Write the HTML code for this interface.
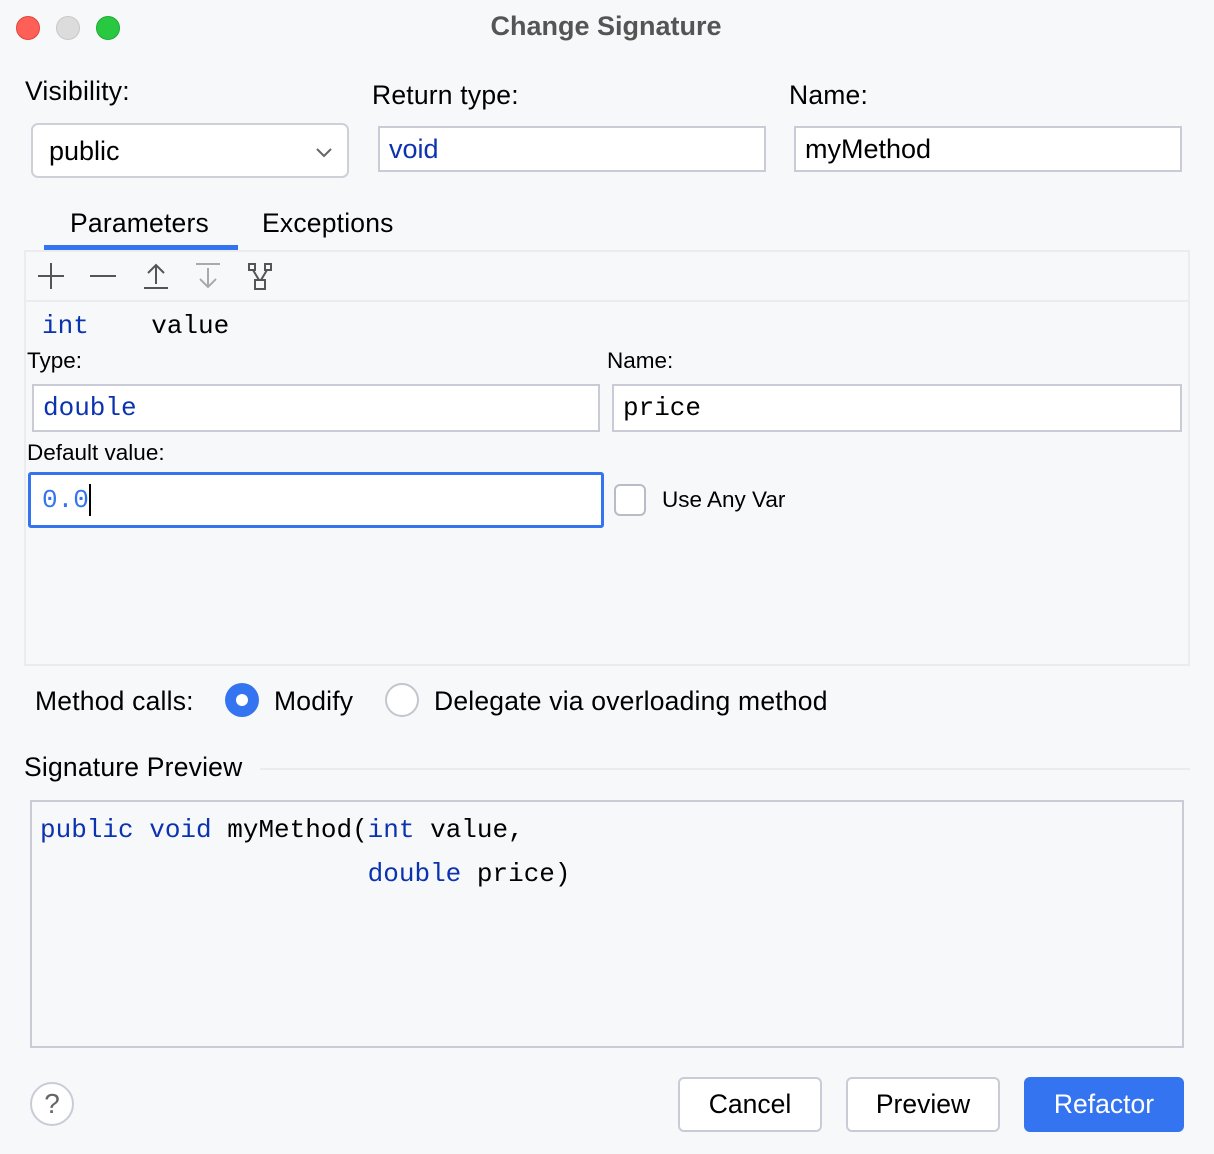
<!DOCTYPE html>
<html><head><style>
*{margin:0;padding:0;box-sizing:border-box}
body{width:1214px;height:1154px;background:#f7f8fa;font-family:"Liberation Sans",sans-serif;color:#000;position:relative;overflow:hidden}
.a{position:absolute}
.mono{font-family:"Liberation Mono",monospace}
.kw{color:#0b33b0}
.in{position:absolute;background:#fff;border:2px solid #c9ccd6;font-size:26px;padding-left:9px;display:flex;align-items:center}
.lbl{position:absolute;font-size:26.5px;letter-spacing:0.2px}
.sl{position:absolute;font-size:22.5px}
.btn{position:absolute;top:1077px;height:55px;border:2px solid #c9ccd6;border-radius:6px;background:#fff;font-size:26.5px;display:flex;align-items:center;justify-content:center}
</style></head><body>
<div class="a" style="left:16px;top:16px;width:24px;height:24px;border-radius:50%;background:#fe5f57;border:1px solid #e0443e"></div>
<div class="a" style="left:56px;top:16px;width:24px;height:24px;border-radius:50%;background:#dcdcdc;border:1px solid #c8c8c8"></div>
<div class="a" style="left:96px;top:16px;width:24px;height:24px;border-radius:50%;background:#28c840;border:1px solid #1eaa33"></div>
<div class="a" style="left:0;top:11px;width:1212px;text-align:center;font-size:27px;font-weight:bold;color:#555">Change Signature</div>

<div class="lbl" style="left:25px;top:76px">Visibility:</div>
<div class="lbl" style="left:372px;top:80px">Return type:</div>
<div class="lbl" style="left:789px;top:80px">Name:</div>
<div class="a" style="left:31px;top:123px;width:318px;height:55px;background:#fff;border:2px solid #cdd0d8;border-radius:7px;font-size:27px;padding:11px 0 0 16px">public
<svg class="a" style="left:282px;top:22px" width="18" height="12"><path d="M2 2l7 7 7-7" stroke="#666" stroke-width="2" fill="none"/></svg></div>
<div class="in" style="left:378px;top:126px;width:388px;height:46px;color:#0b33b0;font-size:27px">void</div>
<div class="in" style="left:794px;top:126px;width:388px;height:46px;font-size:27px">myMethod</div>

<div class="lbl" style="left:70px;top:208px">Parameters</div>
<div class="lbl" style="left:262px;top:208px">Exceptions</div>
<div class="a" style="left:44px;top:245px;width:194px;height:6px;background:#3574f0"></div>
<div class="a" style="left:24px;top:250px;width:1166px;height:416px;border:2px solid #ebecf0;background:#f7f8fa"></div>
<div class="a" style="left:26px;top:300px;width:1162px;height:2px;background:#ebecf0"></div>
<svg class="a" style="left:36px;top:260px" width="250" height="34" fill="none" stroke-width="2">
<path d="M15 3v26M2 16h26" stroke="#555"/>
<path d="M54 16h26" stroke="#555"/>
<path d="M108 28h24M120 24V6M112 13l8-8 8 8" stroke="#555"/>
<path d="M160 4h24M172 8v18M164 19l8 8 8-8" stroke="#aaa"/>
<path d="M213 4h6v6h-6zM229 4h6v6h-6zM217 10l6 10M231 10l-6 10M219 20h10v9h-10z" stroke="#555"/>
</svg>

<div class="a mono" style="left:42px;top:311px;font-size:26px"><span class="kw">int</span>&nbsp;&nbsp;&nbsp;&nbsp;value</div>
<div class="sl" style="left:27px;top:348px">Type:</div>
<div class="sl" style="left:607px;top:348px">Name:</div>
<div class="in mono" style="left:32px;top:384px;width:568px;height:48px;color:#0b33b0">double</div>
<div class="in mono" style="left:612px;top:384px;width:570px;height:48px">price</div>
<div class="sl" style="left:27px;top:440px">Default value:</div>
<div class="in mono" style="left:28px;top:472px;width:576px;height:56px;border:3px solid #3574f0;border-radius:3px;color:#3574f0;padding-left:11px">0.0<span style="display:inline-block;width:2px;height:32px;background:#000"></span></div>
<div class="a" style="left:614px;top:484px;width:32px;height:32px;border:2px solid #b8bcc6;border-radius:6px;background:#fff"></div>
<div class="sl" style="left:662px;top:487px">Use Any Var</div>

<div class="lbl" style="left:35px;top:686px">Method calls:</div>
<div class="a" style="left:225px;top:683px;width:34px;height:34px;border-radius:50%;background:#3574f0"><div class="a" style="left:11px;top:11px;width:12px;height:12px;border-radius:50%;background:#fff"></div></div>
<div class="lbl" style="left:274px;top:686px">Modify</div>
<div class="a" style="left:385px;top:683px;width:34px;height:34px;border-radius:50%;background:#fff;border:2px solid #c3c6ce"></div>
<div class="lbl" style="left:434px;top:686px">Delegate via overloading method</div>

<div class="lbl" style="left:24px;top:752px">Signature Preview</div>
<div class="a" style="left:260px;top:768px;width:930px;height:2px;background:#ebecf0"></div>
<div class="a" style="left:30px;top:800px;width:1154px;height:248px;border:2px solid #c9ccd6;background:#f7f8fa"></div>
<div class="a mono" style="left:40px;top:808px;font-size:26px;line-height:44px;white-space:pre"><span class="kw">public void</span> myMethod(<span class="kw">int</span> value,
                     <span class="kw">double</span> price)</div>

<div class="a" style="left:30px;top:1082px;width:44px;height:44px;border-radius:50%;border:2px solid #c9ccd6;background:#fff;font-size:28px;color:#666;text-align:center;line-height:40px">?</div>
<div class="btn" style="left:678px;width:144px">Cancel</div>
<div class="btn" style="left:846px;width:154px">Preview</div>
<div class="btn" style="left:1024px;width:160px;background:#3574f0;border-color:#3574f0;color:#fff">Refactor</div>
</body></html>
